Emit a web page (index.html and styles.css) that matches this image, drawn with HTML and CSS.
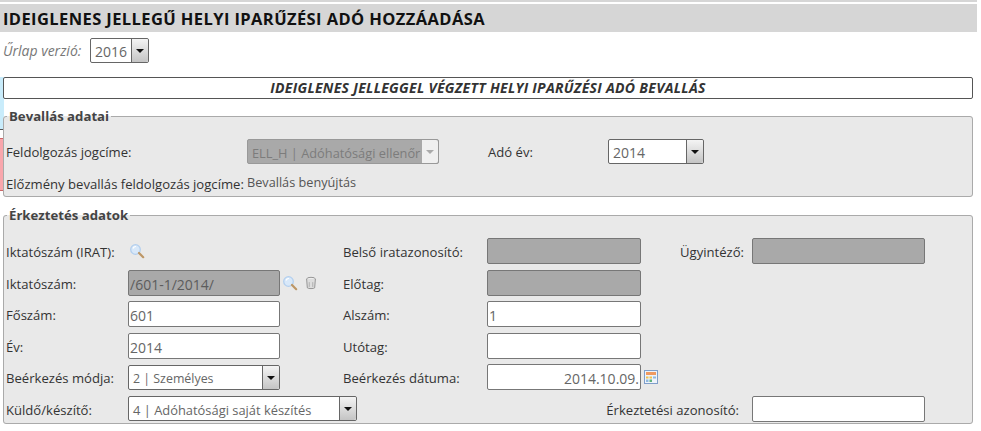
FILE: index.html
```html
<!DOCTYPE html>
<html lang="hu">
<head>
  <meta charset="UTF-8" />
  <title>Ideiglenes jellegű helyi iparűzési adó hozzáadása</title>
  <link rel="stylesheet" href="styles.css">
</head>
<body>
  <svg class="icon-defs" width="0" height="0">
    <symbol id="ico-search" viewBox="0 0 16 16">
      <circle cx="6.5" cy="6.5" r="4.8" fill="#d8e8f9" stroke="#b3cfee" stroke-width="1.3"/>
      <path d="M4 5.5a3 3 0 0 1 3-2" fill="none" stroke="#fff" stroke-width="1.2"/>
      <path d="M10 10l4.2 4.2" stroke="#bd9766" stroke-width="2.2" stroke-linecap="round"/>
    </symbol>
  </svg>

  <div class="stripe"><div class="stripe-blue"></div><div class="stripe-gap"></div><div class="stripe-pink"></div></div>

  <div class="top-line"></div>
  <h1 class="page-title">IDEIGLENES JELLEGŰ HELYI IPARŰZÉSI ADÓ HOZZÁADÁSA</h1>

  <div class="version-row">
    <span class="version-label">Űrlap verzió:</span>
    <div class="combo combo-version"><span class="combo-text">2016</span><span class="combo-btn"></span></div>
  </div>

  <div class="form-title">IDEIGLENES JELLEGGEL VÉGZETT HELYI IPARŰZÉSI ADÓ BEVALLÁS</div>

  <fieldset class="panel panel-bevallas">
    <legend>Bevallás adatai</legend>
    <div class="grid-bevallas">
      <label>Feldolgozás jogcíme:</label>
      <div class="combo combo-disabled"><span class="combo-text">ELL_H | Adóhatósági ellenőr</span><span class="combo-btn"></span></div>
      <label>Adó év:</label>
      <div class="combo combo-year"><span class="combo-text">2014</span><span class="combo-btn"></span></div>
      <label class="row-two">Előzmény bevallás feldolgozás jogcíme:</label>
      <span class="value row-two">Bevallás benyújtás</span>
    </div>
  </fieldset>

  <fieldset class="panel panel-erkeztetes">
    <legend>Érkeztetés adatok</legend>
    <div class="grid-erkeztetes">
      <label>Iktatószám (IRAT):</label>
      <div class="cell"><svg class="icon icon-first"><use href="#ico-search"/></svg></div>
      <label>Belső iratazonosító:</label>
      <div class="cell"><input class="field field-mid" disabled></div>
      <label>Ügyintéző:</label>
      <div class="cell"><input class="field field-wide" disabled></div>

      <label>Iktatószám:</label>
      <div class="cell">
        <input class="field" disabled value="/601-1/2014/">
        <svg class="icon icon-after"><use href="#ico-search"/></svg>
        <svg class="icon icon-trash" viewBox="0 0 16 16">
          <ellipse cx="8" cy="3.5" rx="5" ry="2" fill="#eee" stroke="#8a8a8a"/>
          <path d="M3 3.5l.8 10c.6 1.2 7.8 1.2 8.4 0l.8-10" fill="#ddd" stroke="#8a8a8a"/>
          <path d="M6 7v5.5M10 7v5.5" stroke="#aaa"/>
        </svg>
      </div>
      <label>Előtag:</label>
      <div class="cell wide-cell"><input class="field field-mid" disabled></div>

      <label>Főszám:</label>
      <div class="cell"><input class="field" value="601"></div>
      <label>Alszám:</label>
      <div class="cell wide-cell"><input class="field field-mid" value="1"></div>

      <label>Év:</label>
      <div class="cell"><input class="field" value="2014"></div>
      <label>Utótag:</label>
      <div class="cell wide-cell"><input class="field field-mid"></div>

      <label>Beérkezés módja:</label>
      <div class="cell"><div class="combo combo-mode"><span class="combo-text">2 | Személyes</span><span class="combo-btn"></span></div></div>
      <label>Beérkezés dátuma:</label>
      <div class="cell wide-cell">
        <input class="field field-mid field-date" value="2014.10.09.">
        <svg class="icon icon-cal" viewBox="0 0 14 14">
          <rect x=".5" y=".5" width="13" height="13" fill="#eef3fa" stroke="#7f9ec9"/>
          <rect x="2" y="2" width="10" height="3" fill="#ef9a62"/>
          <path d="M2 6.5h2.5v2H2zM5.5 6.5H8v2H5.5z" fill="#f0c04f"/>
          <path d="M9 6.5h3v2H9zM2 9.5h2.5V12H2z" fill="#8fb8e0"/>
          <path d="M5.5 9.5H8V12H5.5z" fill="#5fb27a"/>
        </svg>
      </div>

      <label>Küldő/készítő:</label>
      <div class="cell sender-cell"><div class="combo combo-sender"><span class="combo-text">4 | Adóhatósági saját készítés</span><span class="combo-btn"></span></div></div>
      <label class="label-arrival">Érkeztetési azonosító:</label>
      <div class="cell"><input class="field field-wide"></div>
    </div>
  </fieldset>
</body>
</html>
```

FILE: styles.css
```css
html, body {
  height: 431px;
  overflow: hidden;
}

body {
  margin: 0;
  position: relative;
  font-family: "Open Sans", sans-serif;
  font-size: 13.1px;
  color: #333;
  background: #fff;
}

label {
  padding-top: 2px;
}

.icon-defs {
  position: absolute;
}

/* leftover colour strip behind the left edge */
.stripe {
  position: absolute;
  left: 0;
  top: 77px;
  width: 4px;
}

.stripe-blue {
  height: 52px;
  background: #c9ecfb;
  border-bottom: 1px solid #555;
}

.stripe-gap {
  height: 8px;
  border-bottom: 1px solid #c66;
}

.stripe-pink {
  height: 51px;
  background: #f9a6ac;
  border-bottom: 1px solid #c66;
}

.top-line {
  height: 2px;
  width: 977px;
  background: #d6d6d6;
  margin-bottom: 2px;
}

.page-title {
  margin: 0;
  width: 974px;
  height: 28px;
  padding-left: 3px;
  background: #d6d6d6;
  color: #111;
  font-size: 16.5px;
  font-weight: 700;
  line-height: 30px;
  letter-spacing: 0.4px;
}

.version-row {
  display: flex;
  align-items: center;
  gap: 6px;
  height: 24px;
  margin: 6px 0 15px 3px;
}

.version-label {
  width: 81px;
  font-style: italic;
  color: #777;
  font-size: 14px;
}

.form-title {
  position: relative;
  box-sizing: border-box;
  width: 970px;
  height: 22px;
  margin: 0 0 10px 3px;
  border: 1px solid #555;
  border-radius: 2px;
  background: #fff;
  text-align: center;
  font-size: 14px;
  font-weight: 700;
  font-style: italic;
  line-height: 20px;
  letter-spacing: 0.3px;
}

.panel {
  position: relative;
  box-sizing: border-box;
  width: 970px;
  margin: 0 0 11px 3px;
  padding: 0 0 0 2px;
  border: 1px solid #aaa;
  border-radius: 3px;
  background: #e9e9e9;
  min-width: 0;
}

.panel legend {
  padding: 0 2px;
  margin-left: 1px;
  font-size: 13.2px;
  font-weight: 700;
  line-height: 14px;
  color: #444;
}

.panel-bevallas {
  height: 88px;
}

.panel-erkeztetes {
  height: 216px;
}

.grid-bevallas {
  display: grid;
  grid-template-columns: 241px 241px 120px 96px;
  grid-template-rows: 26px 24px;
  row-gap: 5px;
  align-items: center;
  padding-top: 15px;
}

.row-two {
  margin-top: 4px;
  white-space: nowrap;
}

.value {
  color: #555;
  font-size: 12.7px;
  margin-top: 1px;
}

.grid-erkeztetes {
  display: grid;
  grid-template-columns: 122px 215px 144px 193px 72px 173px;
  grid-auto-rows: 26px;
  row-gap: 5.6px;
  align-items: center;
  padding-top: 16px;
}

.cell {
  display: flex;
  align-items: center;
  height: 26px;
}

.wide-cell {
  grid-column: 4 / 7;
}

.sender-cell {
  grid-column: 2 / 5;
}

.label-arrival {
  text-align: right;
  padding-right: 13px;
  margin-left: -144px;
  white-space: nowrap;
}

.field {
  box-sizing: border-box;
  width: 152px;
  height: 26px;
  margin: 0;
  padding: 3px 1px 0;
  border: 1px solid #777;
  border-radius: 2px;
  background: #fff;
  font: 14px "Open Sans", sans-serif;
  color: #666;
}

.field:disabled {
  background: #a9a9a9;
  color: #5c5c5c;
}

.field-mid {
  width: 154px;
}

.field-wide {
  width: 173px;
}

.field-date {
  text-align: right;
}

.combo {
  box-sizing: border-box;
  display: flex;
  height: 25px;
  border: 1px solid #666;
  border-radius: 2px;
  background: #fff;
  color: #666;
  font-size: 12.7px;
  line-height: 26px;
}

.combo-text {
  flex: 1;
  min-width: 0;
  padding-left: 4px;
  overflow: hidden;
  white-space: nowrap;
}

.combo-btn {
  position: relative;
  flex: none;
  width: 16px;
  background: linear-gradient(#f4f4f4, #c4c4c4);
  border-left: 1px solid #666;
  border-radius: 0 2px 2px 0;
}

/* little arrow of the dropdown button */
.combo-btn::after {
  content: "";
  position: absolute;
  left: 4px;
  top: 10px;
  border: 4px solid transparent;
  border-bottom: 0;
  border-top-color: #111;
}

.combo-version,
.combo-year {
  font-size: 14px;
}

.combo-version {
  width: 59px;
}

.combo-disabled {
  width: 192px;
  background: #a9a9a9;
  border-color: #999;
  color: #7c7c7c;
  font-size: 12.8px;
}

.combo-disabled .combo-btn {
  background: #f0f0f0;
  border-left: 0;
}

.combo-disabled .combo-btn::after {
  border-top-color: #aaa;
}

.combo-mode {
  width: 152px;
  font-size: 12.4px;
}

.combo-sender {
  width: 229px;
  font-size: 12.9px;
}

.icon {
  flex: none;
  width: 16px;
  height: 16px;
}

.icon-first {
  margin-left: 1px;
}

.icon-after {
  margin-left: 2px;
}

.icon-trash {
  margin-left: 6px;
  width: 14px;
  height: 14px;
}

.icon-cal {
  margin-left: 3px;
  width: 14px;
  height: 14px;
}
```
